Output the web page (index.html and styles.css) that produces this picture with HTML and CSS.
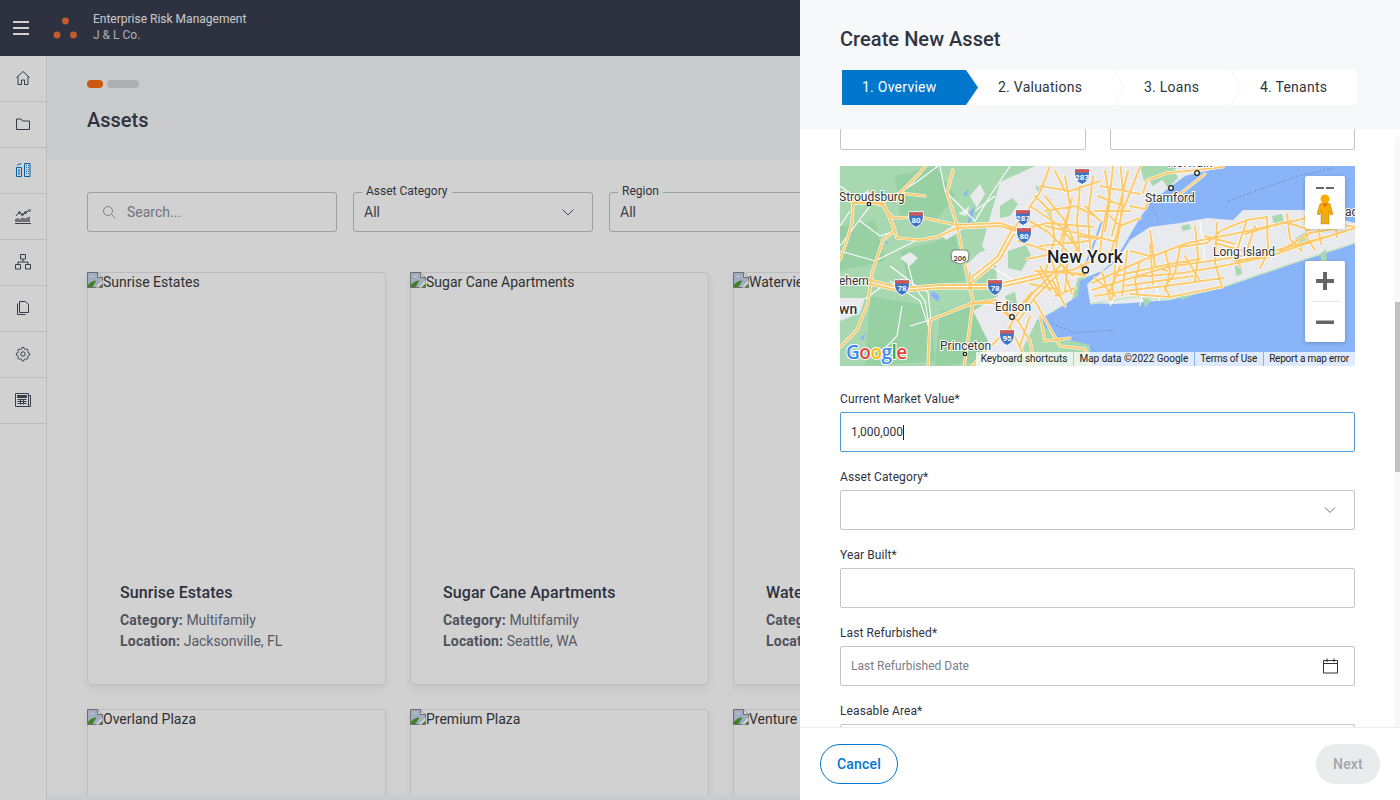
FILE: index.html
```html
<!DOCTYPE html>
<html lang="en">
<head>
    <meta charset="UTF-8">
    <meta name="viewport" content="width=device-width, initial-scale=1.0">
    <title>Assets - Enterprise Risk Management</title>
    <link rel="stylesheet" href="styles.css">
</head>
<body>
    <svg class="defs" width="0" height="0">
        <symbol id="broken" viewBox="0 0 16 16">
            <path d="M.5.5h10l5 5v10h-15z" fill="#c5d3ee" stroke="#858585"/>
            <path d="M3 5c1-1.500 3.500-1.500 4.500 0z" fill="#fff"/>
            <path d="M1 15v-2c2-3 5-4.500 8.500-4.500l-4 6.500z" fill="#4f9e2c"/>
            <path d="M15.500 8l-7 7.500h3.500l3.500-3z" fill="#fff"/>
            <path d="M12 15l3-3v3z" fill="#4f9e2c"/>
            <path d="M10.500.5v5h5" fill="#fff" stroke="#858585"/>
        </symbol>
        <symbol id="interstate" viewBox="0 0 16 18">
            <path d="M1 1.500q3.500 1 7 0q3.500 1 7 0c1 6 1 12-7 16c-8-4-8-10-7-16z" fill="#3f74c4" stroke="#fff"/>
            <path d="M1.200 2q3.300 1 6.800 0q3.500 1 6.800 0l.2 3.500h-14z" fill="#d9534f"/>
        </symbol>
    </svg>

    <div class="page">
        <header class="topbar">
            <button class="menu-btn" aria-label="Menu">
                <span></span><span></span><span></span>
            </button>
            <svg class="logo" width="26" height="24" viewBox="0 0 26 24">
                <circle cx="13.500" cy="5" r="3.400"/>
                <circle cx="5" cy="19" r="3.400"/>
                <circle cx="21.500" cy="19" r="3.400"/>
            </svg>
            <div class="brand">
                <div class="brand-name">Enterprise Risk Management</div>
                <div class="brand-sub">J &amp; L Co.</div>
            </div>
        </header>

        <div class="layout">
            <nav class="sidebar">
                <a class="nav-item">
                    <svg width="16" height="16" viewBox="0 0 16 16"><path d="M1.500 7.500l6.500-6 6.500 6M3 6.500v8h3.500v-4.500h3v4.500h3.500v-8"/></svg>
                </a>
                <a class="nav-item">
                    <svg width="16" height="16" viewBox="0 0 16 16"><path d="M1.500 13.500v-10.500h4.500l1.500 2h7v8.500z"/></svg>
                </a>
                <a class="nav-item active">
                    <svg width="16" height="16" viewBox="0 0 16 16"><path d="M1.500 5.500h5v9h-5zM9.500 1.500h5.500v13h-5.500zM3 8h2M3 10h2M3 12h2M11 3.500h.8M13 3.500h.8M11 5.500h.8M13 5.500h.8M11 7.500h.8M13 7.500h.8M11 9.500h.8M13 9.500h.8M11 11.500h.8M13 11.500h.8M2.500 3.500l1-1.500 1.500.5 1-1.500"/></svg>
                </a>
                <a class="nav-item">
                    <svg width="16" height="16" viewBox="0 0 16 16"><path d="M0 15.500h16"/><path class="fill-shape" d="M0 14v-3l3-1 2 1.500 2-2 3 1 2-1 3-1v5.500z"/><path d="M1 8l3-3.500 3 2.500 3-2 3.500-2.500"/><circle cx="4.500" cy="4.500" r="1"/><circle cx="7.500" cy="6.500" r="1"/><circle cx="10.500" cy="4.500" r="1"/><circle cx="14.500" cy="2.500" r="1"/></svg>
                </a>
                <a class="nav-item">
                    <svg width="16" height="16" viewBox="0 0 16 16"><path d="M5.500 .5h5v4.500h-5zM.5 10.500h5v4.500h-5zM10.500 10.500h5v4.500h-5zM8 5v3M3 10.500v-2.500h10v2.500"/></svg>
                </a>
                <a class="nav-item">
                    <svg width="16" height="16" viewBox="0 0 16 16"><path d="M4.500 1.500h6l3 3v8h-9zM2.500 3.500v11h8"/></svg>
                </a>
                <a class="nav-item">
                    <svg width="16" height="16" viewBox="0 0 16 16"><circle cx="8" cy="8" r="2.200"/><path d="M7 2h2l.4 1.600 1.400.6 1.400-.8 1.400 1.400-.8 1.400.6 1.400 1.600.4v2l-1.600.4-.6 1.400.8 1.400-1.400 1.400-1.400-.8-1.400.6-.4 1.600h-2l-.4-1.600-1.400-.6-1.400.8-1.400-1.400.8-1.400-.6-1.400-1.600-.4v-2l1.600-.4.6-1.400-.8-1.400 1.400-1.400 1.400.8 1.400-.6z" transform="translate(.4 -.4) scale(.95)"/></svg>
                </a>
                <a class="nav-item">
                    <svg width="16" height="16" viewBox="0 0 16 16"><path d="M.5 1.500h13v13h-13zM13.500 3.500h2v11h-2"/><path d="M2.500 3.500h9v2h-9z" class="fill-dark"/><path d="M2.500 7.500h9M2.500 9.500h9M2.500 11.500h9M5.500 7v5.500M8.500 7v5.500"/></svg>
                </a>
            </nav>

            <main class="main">
                <section class="page-head">
                    <div class="crumbs">
                        <span class="crumb crumb-current"></span>
                        <span class="crumb crumb-next"></span>
                    </div>
                    <h1 class="page-title">Assets</h1>
                </section>

                <section class="content">
                    <div class="filters">
                        <div class="search">
                            <svg width="14" height="14" viewBox="0 0 14 14"><circle cx="6" cy="6" r="4.500"/><path d="M9.500 9.500l4 4"/></svg>
                            <span>Search...</span>
                        </div>
                        <div class="filter-select">
                            <label>Asset Category</label>
                            <span>All</span>
                            <svg width="12" height="12" viewBox="0 0 12 12"><path d="M.5 3.500l5.500 5.500 5.500-5.500"/></svg>
                        </div>
                        <div class="filter-select">
                            <label>Region</label>
                            <span>All</span>
                            <svg width="12" height="12" viewBox="0 0 12 12"><path d="M.5 3.500l5.500 5.500 5.500-5.500"/></svg>
                        </div>
                    </div>

                    <div class="cards">
                        <article class="card">
                            <div class="card-img"><svg width="16" height="16"><use href="#broken"/></svg>Sunrise Estates</div>
                            <div class="card-body">
                                <h3>Sunrise Estates</h3>
                                <p><b>Category:</b> Multifamily</p>
                                <p><b>Location:</b> Jacksonville, FL</p>
                            </div>
                        </article>
                        <article class="card">
                            <div class="card-img"><svg width="16" height="16"><use href="#broken"/></svg>Sugar Cane Apartments</div>
                            <div class="card-body">
                                <h3>Sugar Cane Apartments</h3>
                                <p><b>Category:</b> Multifamily</p>
                                <p><b>Location:</b> Seattle, WA</p>
                            </div>
                        </article>
                        <article class="card">
                            <div class="card-img"><svg width="16" height="16"><use href="#broken"/></svg>Waterview Apartments</div>
                            <div class="card-body">
                                <h3>Waterview Apartments</h3>
                                <p><b>Category:</b> Multifamily</p>
                                <p><b>Location:</b> Austin, TX</p>
                            </div>
                        </article>
                        <article class="card">
                            <div class="card-img"><svg width="16" height="16"><use href="#broken"/></svg>Overland Plaza</div>
                        </article>
                        <article class="card">
                            <div class="card-img"><svg width="16" height="16"><use href="#broken"/></svg>Premium Plaza</div>
                        </article>
                        <article class="card">
                            <div class="card-img"><svg width="16" height="16"><use href="#broken"/></svg>Venture Tower</div>
                        </article>
                    </div>
                </section>
                <div class="h-scroll"></div>
            </main>
        </div>
    </div>

    <div class="overlay"></div>

    <aside class="panel">
        <div class="panel-head">
            <h2>Create New Asset</h2>
            <div class="steps">
                <div class="step step-active">1. Overview</div>
                <div class="step step-2">2. Valuations</div>
                <svg class="step-sep" width="12" height="35" viewBox="0 0 12 35"><path d="M1 0l10 17.500-10 17.500"/></svg>
                <div class="step step-3">3. Loans</div>
                <svg class="step-sep" width="12" height="35" viewBox="0 0 12 35"><path d="M1 0l10 17.500-10 17.500"/></svg>
                <div class="step step-4">4. Tenants</div>
            </div>
        </div>

        <div class="panel-body">
            <form class="form">
                <div class="form-row">
                    <div class="box"></div>
                    <div class="box"></div>
                </div>

                <div class="map">
                    <svg class="map-art" width="515" height="200" viewBox="0 0 515 200">
                        <defs>
                            <g id="roads" fill="none" stroke-linecap="round" stroke-linejoin="round">
                                <path d="M0 28l13 9 27 0 13 15 27-1 37 8 43-2 20 7 27-7 46 4M0 33l40 5M117 62l43-2 20 6"/>
                                <path d="M0 112l30 2 30 8 40-3 55 0 32-8 23-5 23-2 20-10M30 118l30 7 40-3 55 0 32-7 23-6"/>
                                <path d="M113 4l-6 23 10 32 3 15 8 37 5 25-6 45-3 20M128 114l29-23 13-24 13-16 17-25 10-26M130 118l30-25 14-25"/>
                                <path d="M90 154l43-17h20l20 17 20-27 20-20 25-25M90 154l-2 46M173 154l-3 7-13 13-17 17-8 9M133 137l22-3 20 12 17-20M153 137l25 18 18-25 22-22"/>
                                <path d="M13 37l-1 20-5 17-7 20M43 37l12 27-12 10-11 33-4 30-11 27-17 17M50 52l7 20 23 2 17-3 20-9M60 27l20-20 10-13M40 37l20-10 25 3"/>
                                <path d="M170 161l10 20 10 19M195 135l12 22 13 23 25 3 5 17M190 150l-10 30M178 155l12 20 5 25M200 150l5 25 25-3"/>
                                <path d="M183 51l25 15 20 20 15 15M190 40l30 20 23 30M205 30l20 25 15 35M225 10l5 30-5 25-5 35M240 20l-3 35 3 40 2 10M253 10l-5 40 3 45M215 5l10 20M200 20l30 5 30-10M205 60l45 10M200 80l48-5M195 105l50 3M215 130l20-8M210 125l-12-20M225 140l-12-25M232 128l-9-28M220 105l25 5"/>
                                <path d="M178 75l30 10 25 25M187 93l25-5 25 8M205 45l30-5 20 10M195 30l15 15 5 30M232 32l-12 45M212 95l8 30M200 100l18 30M190 118l25 5M215 72l-10 35M245 40l15 15M238 70l20 3M228 90l-3 35"/>
                                <path d="M273 1l-3 26-7 34-3 25M280-6l3 33-3 34-4 20M300 1l-17 43-6 23-7 22M260 20l40 8M255 45l35 0M252 70l25 6M303 27l4-13 20-7 30-3 26-3M290 40l15 3 5-10 30-5 25-20M270 50l10 10 20-8M265 5l5 30-5 30M288 5l-10 40-6 25M258 30l25 10M255 88l15-2"/>
                                <path d="M252 117l51-23 44-17 56-11 64-14 48 9M252 124l75-23 50-7 60-10 56-15 22-7M293 111l50-4 34-6 50-10 50-17 38-12M255 130l38-6 40-5 50-7M330 131l50-10M290 128l40 3M330 131l-5-10 10-14 5-26M377 57l-2 40 7 24M407 54l-10 30 3 17M427 51l1 36-8 15M340 81l27-4 15-13 25-10 20-3M300 95l-5 20 3 15M355 60l3 30-3 25M310 78l3 40M447 48l3 25 12 12M465 50l2 22 8 12M280 100l-10 25M375 77l25 7 27 3"/>
                                <path d="M255 112l20 18M262 106l8 28M275 98l-3 35M287 85l-5 45M275 110l55-12 30-5M283 120l70-10M310 65l5 35 12 5M325 85l5 20-5 20M290 85l20 5M345 90l15 25M365 70l30 8M395 95l30-5M415 60l-10 30M405 68l40-12 25 8M440 85l30-18 35-6M478 60l3 18M495 55l2 16"/>
                            </g>
                        </defs>

                        <rect width="515" height="200" fill="#a8d8b0"/>
                        <g fill="#97d0a3">
                            <path d="M55 10l40-10 20 30-20 25-35-5zM60 85l55-15 10 45-55 5zM30 130l60 10 5 55-70 5zM100 145l45-5 5 55-55 5z"/>
                            <path d="M0 60l35-5 10 40-45 10z"/>
                        </g>
                        <g fill="#e8eaed">
                            <path d="M160 16l35-16h105l10 37-17 29-8 15-10 14-13 10-12 5-12 2-6 22-25 15-10 5-15 30-22 16h-20l8-25-15-30 25-15-2-30-14-20z"/>
                            <path d="M0 132h25l-5 15-20 8zM60 92l10-6 8 6-8 8zM100 68l18-12 4 8-16 10zM125 100l15-14 16-4-6 18-15 14zM130 30l10-12 5 10-8 14zM118 48l12-8-4 10zM20 30l8-6 4 6-8 4z"/>
                            <path d="M300 20l20-20h65l-50 20-15 15z"/>
                        </g>
                        <g fill="#a8d8b0">
                            <path d="M168 85l18-6 5 10-10 16-13-3zM205 40l8 4-4 8zM195 20l8 2-4 6zM212 90l8-2-2 8zM160 40l12-8 6 6-8 12-10 2zM165 130l10-4 2 12-8 6z"/>
                            <path d="M305 8l12-8h22l-14 12-12 8z"/>
                        </g>
                        <g fill="#8ab4f8">
                            <path d="M123 28l6-5-3 8zM130 46l5-6-3 14-5 6zM92 125l8 5-2 6-7-6zM73 119l7-1-2 5zM45 75l3 1-2 3zM20 172l6-5-3 8z"/>
                        </g>
                        <path d="M387 0h128v200h-265v-21l-33-8-20-17 18-9 23-15 2-15 10-5 12-5 13-11 12-20 13-22 10-15 15-12 20-15z" fill="#8ab4f8"/>
                        <path d="M262 55l-7 20-8 20-4 15" fill="none" stroke="#8ab4f8" stroke-width="2"/>
                        <path d="M250 137l-3-19 15-12 15-11 13-21 20-13 30-4 27-5 26 2 10-10 64 0 48 13v20l-62 20-73 25-53 12-34 3-20 1z" fill="#e8eaed"/>
                        <path d="M250 138l43-7 34 3 53-12 73-25 62-20" fill="none" stroke="#c9e6c5" stroke-width="1.500"/>
                        <g fill="#a8d8b0">
                            <path d="M320 10l14-8 4 10-10 10zM341 60l8-2 2 5-8 2zM432 50l10-2 2 10-10 0zM455 73l12-8 2 12-8 5zM480 88l6-5 1 15-5 0zM395 100l6-2 1 10-6 2zM303 132l8 2-6 8zM340 130l10 0-8 4z"/>
                        </g>
                        <path d="M205 155l30 12 40-3M388 35l70-25 35-8M310 37l8 15M250 180l15 15" fill="none" stroke="#6b7c93" stroke-width=".7" stroke-dasharray="2 2"/>
                        <g fill="none" stroke="#fff" stroke-width="1.100">
                            <path d="M0 20l25 18M38 40l40-25 20-15M0 85l35 10 40-20 20-5M50 100l20 15 15 20 5 30M100 0l5 25 30 30 15-25 20-30M135 45l20-15M90 165l-10-30-30-20M0 60l10-15M150 100l25 15M30 40l-30 40M275 130l-5 10M300 140l5-25M70 160l20-6M68 98l5 20 15 8 3 28M20 55l20 15 15-5M45 118l-20 15M62 140l-5 30-15 15"/>
                            <path d="M310 100l10 35M405 60l-8 35M360 55l5 40"/>
                        </g>
                        <use href="#roads" stroke="#fff" stroke-width="3.200"/>
                        <use href="#roads" stroke="#fdcb6e" stroke-width="2.100"/>
                        <g class="shield-text">
                            <use href="#interstate" x="68" y="44" width="16" height="18"/><text x="76" y="57">80</text>
                            <use href="#interstate" x="232" y="1" width="20" height="18"/><text x="242" y="14">287</text>
                            <use href="#interstate" x="173" y="42" width="20" height="18"/><text x="183" y="55">287</text>
                            <use href="#interstate" x="176" y="60" width="16" height="18"/><text x="184" y="73">80</text>
                            <use href="#interstate" x="54" y="112" width="16" height="18"/><text x="62" y="125">78</text>
                            <use href="#interstate" x="147" y="112" width="16" height="18"/><text x="155" y="125">78</text>
                            <use href="#interstate" x="159" y="162" width="16" height="18"/><text x="167" y="175">95</text>
                            <path d="M113 84h14l2 4-1 7-8 3-8-3-1-7z" fill="#fff" stroke="#555" stroke-width=".7"/><text class="shield-dark" x="120" y="95">206</text>
                        </g>
                        <g class="map-labels">
                            <text x="-1" y="35">Stroudsburg</text>
                            <text x="-1" y="119">ehem</text>
                            <text x="-1" y="148" class="map-major-sm">wn</text>
                            <text x="155" y="145">Edison</text>
                            <text x="100" y="184">Princeton</text>
                            <text x="305" y="36">Stamford</text>
                            <text x="373" y="90">Long Island</text>
                            <text x="505" y="50">ad</text>
                            <text x="328" y="1">Norwalk</text>
                            <text class="map-major" x="207" y="97">New York</text>
                        </g>
                        <g fill="#fff" stroke="#222" stroke-width="1.300">
                            <circle cx="245.500" cy="104" r="3"/>
                            <circle cx="172" cy="151" r="2.300"/>
                            <circle cx="125" cy="188" r="1.700"/>
                            <circle cx="331" cy="22" r="2.300"/>
                            <circle cx="357" cy="7" r="2.300"/>
                            <circle cx="29" cy="38" r="1.700"/>
                        </g>
                        <text class="google" x="6" y="193"><tspan fill="#4285f4">G</tspan><tspan fill="#ea4335">o</tspan><tspan fill="#fbbc05">o</tspan><tspan fill="#4285f4">g</tspan><tspan fill="#34a853">l</tspan><tspan fill="#ea4335">e</tspan></text>
                    </svg>

                    <div class="map-pegman">
                        <div class="pegman-dashes"><span></span><span></span></div>
                        <svg width="20" height="32" viewBox="0 0 20 32">
                            <circle cx="10" cy="6" r="4.500" fill="#f9ab00"/>
                            <path d="M5 10.500h10l3 10.500-2.500 1-1.500-4v13h-3.500v-9h-1v9h-3.500v-13l-1.500 4-2.500-1z" fill="#f9ab00" stroke="#a06f00" stroke-width=".4"/>
                            <path d="M7 10.500h6l-3 4z" fill="#e8710a"/>
                        </svg>
                    </div>
                    <div class="map-zoom">
                        <button type="button" class="zoom-btn" aria-label="Zoom in"><svg width="18" height="18" viewBox="0 0 18 18"><path d="M0 7h7v-7h4v7h7v4h-7v7h-4v-7h-7z" fill="#666"/></svg></button>
                        <div class="zoom-line"></div>
                        <button type="button" class="zoom-btn" aria-label="Zoom out"><svg width="18" height="18" viewBox="0 0 18 18"><path d="M0 7.500h18v3.500h-18z" fill="#666"/></svg></button>
                    </div>
                    <div class="map-attrib">
                        <span>Keyboard shortcuts</span>
                        <span>Map data ©2022 Google</span>
                        <span class="tight">Terms of Use</span>
                        <span class="tight">Report a map error</span>
                    </div>
                </div>

                <div class="field">
                    <label>Current Market Value*</label>
                    <div class="box box-focus"><span class="typed">1,000,000</span></div>
                </div>
                <div class="field">
                    <label>Asset Category*</label>
                    <div class="box">
                        <span class="grow"></span>
                        <svg class="chev" width="12" height="12" viewBox="0 0 12 12"><path d="M1 3.500l5 5 5-5"/></svg>
                    </div>
                </div>
                <div class="field">
                    <label>Year Built*</label>
                    <div class="box"></div>
                </div>
                <div class="field">
                    <label>Last Refurbished*</label>
                    <div class="box">
                        <span class="grow placeholder">Last Refurbished Date</span>
                        <svg class="cal" width="16" height="16" viewBox="0 0 16 16"><path d="M.5 2.500h14v12.500h-14zM.5 5.500h14M4 .5v3.500M11 .5v3.500"/></svg>
                    </div>
                </div>
                <div class="field">
                    <label>Leasable Area*</label>
                    <div class="box"></div>
                </div>
            </form>
            <div class="scrollbar"><div class="scroll-thumb"></div></div>
        </div>

        <div class="panel-foot">
            <button class="btn btn-cancel">Cancel</button>
            <button class="btn btn-next" disabled>Next</button>
        </div>
    </aside>
</body>
</html>
```

FILE: styles.css
```css
*{
    box-sizing: border-box;
}

body{
    margin: 0;
    height: 800px;
    overflow: hidden;
    font-family: Roboto, "Liberation Sans", sans-serif;
    color: #393e4f;
    background: #fff;
    position: relative;
}

.defs{
    position: absolute;
}

.page{
    width: 800px;
    height: 800px;
    overflow: hidden;
}

/* top bar */
.topbar{
    height: 56px;
    background: #393e4f;
    display: flex;
    align-items: center;
    color: #fff;
}
.menu-btn{
    width: 42px;
    height: 56px;
    padding: 0 13px;
    background: none;
    border: 0;
    display: flex;
    flex-direction: column;
    justify-content: center;
    gap: 4px;
}
.menu-btn span{
    display: block;
    height: 2px;
    background: #fff;
}
.logo{
    margin-left: 10px;
    margin-right: 15px;
    fill: #f26f33;
}
.brand{
    font-size: 12px;
    line-height: 16px;
    padding-bottom: 2px;
}
.brand-name{
    color: #f4f4f4;
}
.brand-sub{
    color: #d5d5d9;
}

.layout{
    display: flex;
    height: 744px;
}

/* side nav */
.sidebar{
    width: 47px;
    flex: none;
    background: #fff;
    border-right: 1px solid #e3e4e6;
}
.nav-item{
    height: 46px;
    padding-bottom: 2px;
    display: flex;
    align-items: center;
    justify-content: center;
    border-bottom: 1px solid #e3e4e6;
}
.nav-item svg{
    fill: none;
    stroke: #454a5b;
    stroke-width: 1;
}
.nav-item .fill-shape{
    fill: #8a8d96;
    stroke: none;
}
.nav-item .fill-dark{
    fill: #454a5b;
}
.nav-item.active svg{
    stroke: #0077cc;
}

.main{
    flex: 1;
    overflow: hidden;
    background: #fff;
}
.page-head{
    height: 104px;
    background: #f7f8fa;
    padding: 24px 40px 0;
}
.crumbs{
    display: flex;
    gap: 4px;
}
.crumb{
    height: 8px;
    border-radius: 4px;
}
.crumb-current{
    width: 16px;
    background: #fb6d14;
}
.crumb-next{
    width: 32px;
    background: #d3d5d8;
}
.page-title{
    margin: 20px 0 0;
    font-size: 20px;
    line-height: 24px;
    font-weight: 500;
    color: #393e4f;
}

.content{
    padding: 32px 40px 0;
    width: 1100px;
}
.filters{
    display: flex;
    gap: 16px;
    font-size: 14px;
}
.search{
    width: 250px;
    height: 40px;
    border: 1px solid #bfc3c7;
    border-radius: 3px;
    display: flex;
    align-items: center;
    padding-left: 14px;
    gap: 11px;
    color: #8b8f99;
}
.search svg{
    fill: none;
    stroke: #9a9da3;
    stroke-width: 1;
}
.filter-select{
    width: 240px;
    height: 40px;
    border: 1px solid #bfc3c7;
    border-radius: 3px;
    display: flex;
    align-items: center;
    justify-content: space-between;
    padding: 0 18px 0 10px;
    position: relative;
    color: #4d5262;
}
.filter-select svg{
    fill: none;
    stroke: #4d5262;
}
.filter-select label{
    position: absolute;
    top: -10px;
    left: 8px;
    padding: 0 4px;
    background: #fff;
    font-size: 12px;
    line-height: 16px;
    color: #393e4f;
}

.cards{
    margin-top: 40px;
    display: grid;
    grid-template-columns: repeat(3, 299px);
    gap: 24px;
}
.card{
    height: 413px;
    border: 1px solid #e6e7e9;
    border-radius: 4px;
    box-shadow: 0 4px 10px rgba(0, 0, 0, .06);
}
.card-img{
    height: 285px;
    margin: -1px 0 0 -1px;
    font-size: 14px;
    line-height: 20px;
    color: #3b3b3b;
    display: flex;
    align-items: flex-start;
}
.card-img svg{
    flex: none;
}
.card-body{
    padding: 24px 32px 0;
}
.card-body h3{
    margin: 0 0 5px;
    font-size: 16px;
    line-height: 24px;
    font-weight: 500;
    letter-spacing: .08px;
    color: #393e4f;
}
.card-body p{
    margin: 0;
    font-size: 14px;
    line-height: 21px;
    color: #6b6f7c;
}
.card-body b{
    font-weight: 700;
    letter-spacing: .2px;
    color: #5f6472;
}
.h-scroll{
    position: absolute;
    left: 47px;
    width: 753px;
    bottom: 0;
    height: 5px;
    background: #f6f8fc;
}

.overlay{
    position: absolute;
    inset: 0;
    background: rgba(0, 0, 0, .18);
}

/* slide-in panel */
.panel{
    position: absolute;
    top: 0;
    right: 0;
    bottom: 0;
    width: 600px;
    background: #fff;
    display: flex;
    flex-direction: column;
    color: #2f3441;
}
.panel-head{
    height: 129px;
    flex: none;
    background: #f7f8fa;
    padding: 27px 0 0 40px;
}
.panel-head h2{
    margin: 0;
    font-size: 20px;
    line-height: 24px;
    font-weight: 500;
    letter-spacing: .05px;
}
.steps{
    margin: 19px 0 0 2px;
    width: 515px;
    height: 35px;
    background: #fff;
    display: flex;
    font-size: 14px;
    line-height: 35px;
    letter-spacing: .25px;
}
.step{
    flex: none;
    padding-left: 20px;
}
.step-active{
    width: 136px;
    background: #0077cc;
    color: #fff;
    clip-path: polygon(0 0, 124px 0, 100% 50%, 124px 100%, 0 100%);
}
.step-2{
    width: 135px;
}
.step-3{
    width: 105px;
    padding-left: 19px;
}
.step-4{
    padding-left: 18px;
}
.step-sep{
    flex: none;
    fill: none;
    stroke: #f3f4f6;
}

.panel-body{
    flex: 1;
    min-height: 0;
    display: flex;
    overflow: hidden;
}
.form{
    width: 515px;
    flex: none;
    margin-left: 40px;
    margin-top: -19px;
}
.form-row{
    display: flex;
    justify-content: space-between;
}
.form-row .box{
    width: 246px;
}
.form-row .box + .box{
    width: 245px;
}
.box{
    height: 40px;
    border: 1px solid #c3c7cb;
    border-radius: 2px;
    display: flex;
    align-items: center;
    padding: 0 15px 0 10px;
    font-size: 12px;
    width: 515px;
    background: #fff;
}
.box-focus{
    border-color: #4c9bd6;
}
.typed{
    border-right: 1px solid #222;
    line-height: 15px;
}
.grow{
    flex: 1;
}
.placeholder{
    color: #7a7e88;
}
.chev{
    fill: none;
    stroke: #6d717c;
    margin-right: 3px;
}
.cal{
    fill: none;
    stroke: #333;
}

.field{
    margin-bottom: 16px;
}
.field label{
    display: block;
    font-size: 12px;
    line-height: 18px;
    margin-bottom: 4px;
    letter-spacing: .1px;
}

.map{
    position: relative;
    width: 515px;
    height: 200px;
    margin: 16px 0 24px;
    overflow: hidden;
}
.map-art{
    display: block;
}
.map-labels text{
    font-size: 12px;
    fill: #333;
    stroke: #fff;
    stroke-width: 2px;
    paint-order: stroke;
}
.map-labels .map-major{
    font-size: 17.500px;
    font-weight: 500;
    letter-spacing: .2px;
    fill: #202124;
    stroke-width: 2.500px;
}
.map-labels .map-major-sm{
    font-size: 14px;
    font-weight: 500;
}
.shield-text text{
    font-size: 8px;
    font-weight: 700;
    fill: #fff;
    text-anchor: middle;
}
.shield-text .shield-dark{
    font-size: 7.500px;
    font-weight: 500;
    fill: #333;
}
.google{
    font-family: "Open Sans", Roboto, sans-serif;
    font-size: 19px;
    font-weight: 600;
    letter-spacing: -.5px;
    stroke: #fff;
    stroke-width: 2px;
    paint-order: stroke;
}
.map-pegman{
    position: absolute;
    top: 10px;
    right: 10px;
    width: 40px;
    height: 53px;
    background: #fff;
    border-radius: 2px;
    box-shadow: 0 1px 4px rgba(0, 0, 0, .2);
    display: flex;
    flex-direction: column;
    align-items: center;
}
.pegman-dashes{
    height: 17px;
    width: 100%;
    padding: 11px 11px 0;
    display: flex;
    justify-content: space-between;
}
.pegman-dashes span{
    width: 8px;
    height: 2px;
    background: #666;
}
.map-zoom{
    position: absolute;
    top: 95px;
    right: 10px;
    width: 40px;
    height: 81px;
    background: #fff;
    border-radius: 2px;
    box-shadow: 0 1px 4px rgba(0, 0, 0, .2);
}
.zoom-btn{
    width: 40px;
    height: 40px;
    padding: 0;
    border: 0;
    background: none;
    display: flex;
    align-items: center;
    justify-content: center;
}
.zoom-line{
    height: 1px;
    margin: 0 5px;
    background: #e6e6e6;
}
.map-attrib{
    position: absolute;
    right: 0;
    bottom: 0;
    height: 14px;
    display: flex;
    gap: 1px;
    font-size: 10px;
    line-height: 14px;
    color: #222;
}
.map-attrib span{
    padding: 0 6px 0 5px;
    background: rgba(255, 255, 255, .72);
}
.map-attrib .tight{
    letter-spacing: -.2px;
}

.scrollbar{
    width: 5px;
    margin-left: 40px;
    margin-top: 8px;
    background: #f8f8f8;
    flex: none;
}
.scroll-thumb{
    height: 170px;
    margin-top: 165px;
    background: #c1c1c1;
}

.panel-foot{
    height: 73px;
    flex: none;
    border-top: 1px solid #eceef0;
    padding: 16px 20px;
    display: flex;
    justify-content: space-between;
}
.btn{
    height: 40px;
    border-radius: 20px;
    font-family: inherit;
    font-size: 14px;
    font-weight: 500;
    letter-spacing: .2px;
    padding: 0;
}
.btn-cancel{
    width: 78px;
    background: #fff;
    border: 1px solid #0077cc;
    color: #0077cc;
}
.btn-next{
    width: 64px;
    background: #e9ebed;
    border: 0;
    color: #a0a5a9;
}
```
